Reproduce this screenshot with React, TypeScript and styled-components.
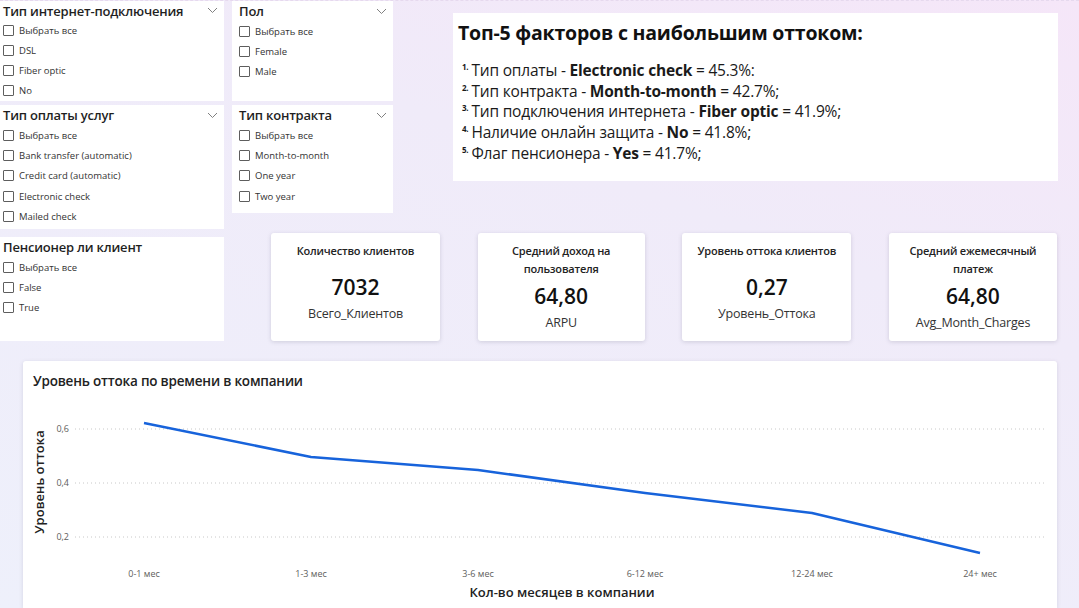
import React from "react";
import styled, { createGlobalStyle } from "styled-components";

const Global = createGlobalStyle`
  html, body { margin: 0; padding: 0; }
  body {
    width: 1079px;
    height: 608px;
    overflow: hidden;
    font-family: "Open Sans", "Noto Sans", sans-serif;
    color: #252423;
    background: linear-gradient(200deg, #f5e6f8 0%, #f0ebf9 35%, #eef0fb 100%);
  }
`;

const Page = styled.div`
  width: 1079px;
  height: 608px;
  display: flex;
  flex-direction: column;
  border-top: 1px dashed #e6d9ee;
  box-sizing: border-box;
`;

const Top = styled.div`
  display: flex;
  gap: 8px;
  height: 360px;
`;

const LeftCol = styled.div`
  width: 224px;
  display: flex;
  flex-direction: column;
`;

const RightArea = styled.div`
  flex: 1;
  display: flex;
  flex-direction: column;
`;

const TopRow = styled.div`
  display: flex;
  align-items: flex-start;
`;

const MidCol = styled.div`
  width: 161px;
  display: flex;
  flex-direction: column;
  gap: 4px;
`;

const Slicer = styled.div<{ $h: number; $mt?: number; $pl?: number }>`
  background: #fff;
  height: ${(p) => p.$h}px;
  margin-top: ${(p) => p.$mt ?? 0}px;
  box-sizing: border-box;
  padding: 0 6px 0 ${(p) => p.$pl ?? 3}px;
  display: flex;
  flex-direction: column;
`;

const SlicerHead = styled.div`
  display: flex;
  justify-content: space-between;
  align-items: center;
  height: 20px;
`;

const SlicerTitle = styled.div`
  font-size: 13px;
  font-weight: 600;
  color: #1f1f1f;
  letter-spacing: -0.2px;
`;

const Item = styled.div`
  display: flex;
  align-items: center;
  height: 20.3px;
  font-size: 9.5px;
  color: #333;
  gap: 5px;
`;

const Box = styled.span`
  width: 9px;
  height: 9px;
  border: 1px solid #5e5e5e;
  border-radius: 1px;
  flex: none;
`;

const Chevron = () => (
  <svg width="11" height="7" viewBox="0 0 11 7">
    <path d="M1 1 L5.5 5.5 L10 1" fill="none" stroke="#808080" strokeWidth="1" />
  </svg>
);

const TextBox = styled.div`
  margin-left: 60px;
  margin-top: 12px;
  width: 605px;
  height: 168px;
  background: #fff;
  box-sizing: border-box;
  padding: 6px 5px;
`;

const TextTitle = styled.div`
  font-size: 19.5px;
  line-height: 27px;
  font-weight: 700;
  color: #111;
  letter-spacing: -0.2px;
  margin-bottom: 14px;
`;

const Line = styled.div`
  font-size: 15.5px;
  line-height: 20.7px;
  color: #1a1a1a;
  letter-spacing: -0.2px;
  padding-left: 4px;
  b { font-weight: 700; }
`;

const Num = styled.sup`
  font-size: 8px;
  font-weight: 700;
  margin-right: 3px;
  line-height: 0;
  vertical-align: 6px;
`;

const KpiRow = styled.div`
  display: flex;
  justify-content: space-between;
  width: 786px;
  margin-top: 20px;
  margin-left: 39px;
`;

const Card = styled.div<{ $w: number }>`
  width: ${(p) => p.$w}px;
  height: 108px;
  background: #fff;
  border-radius: 3px;
  box-shadow: 0 1px 4px rgba(60, 60, 90, 0.18);
  display: flex;
  flex-direction: column;
  align-items: center;
  text-align: center;
  box-sizing: border-box;
  padding: 9px 10px 4px;
`;

const CardTitle = styled.div`
  font-size: 11px;
  font-weight: 600;
  color: #222;
  line-height: 17.5px;
  letter-spacing: -0.2px;
`;

const CardBody = styled.div`
  flex: 1;
  display: flex;
  flex-direction: column;
  align-items: center;
  justify-content: center;
`;

const CardValue = styled.div`
  font-size: 21px;
  font-weight: 600;
  color: #111;
  line-height: 26px;
`;

const CardSub = styled.div`
  font-size: 12.5px;
  line-height: 17px;
  color: #333;
  margin-top: 5px;
  letter-spacing: -0.2px;
`;

const ChartCard = styled.div`
  margin-left: 23px;
  width: 1034px;
  flex: 1;
  background: #fff;
  border-radius: 3px 3px 0 0;
  box-shadow: 0 1px 4px rgba(60, 60, 90, 0.15);
  display: flex;
  flex-direction: column;
`;

const ChartTitle = styled.div`
  font-size: 13.5px;
  font-weight: 600;
  color: #222;
  padding: 11px 0 0 10px;
  height: 23px;
  letter-spacing: -0.2px;
`;

const Plot = styled.svg`
  display: block;
  font-family: "Open Sans", "Noto Sans", sans-serif;
`;

type S = { title: string; items: string[]; h: number; chev: boolean; mt?: number };

const slicers1: S[] = [
  { title: "Тип интернет-подключения", items: ["Выбрать все", "DSL", "Fiber optic", "No"], h: 100, mt: 0, chev: true },
  { title: "Тип оплаты услуг", items: ["Выбрать все", "Bank transfer (automatic)", "Credit card (automatic)", "Electronic check", "Mailed check"], h: 124, mt: 4, chev: true },
  { title: "Пенсионер ли клиент", items: ["Выбрать все", "False", "True"], h: 104, mt: 8, chev: false },
];
const slicers2: S[] = [
  { title: "Пол", items: ["Выбрать все", "Female", "Male"], h: 100, chev: true },
  { title: "Тип контракта", items: ["Выбрать все", "Month-to-month", "One year", "Two year"], h: 108, chev: true },
];

const SlicerView = ({ s, pl }: { s: S; pl?: number }) => (
  <Slicer $h={s.h} $mt={s.mt} $pl={pl}>
    <SlicerHead>
      <SlicerTitle>{s.title}</SlicerTitle>
      {s.chev && <Chevron />}
    </SlicerHead>
    {s.items.map((it) => (
      <Item key={it}>
        <Box />
        {it}
      </Item>
    ))}
  </Slicer>
);

const kpis = [
  { w: 169, title: ["Количество клиентов"], value: "7032", sub: "Всего_Клиентов" },
  { w: 167, title: ["Средний доход на", "пользователя"], value: "64,80", sub: "ARPU" },
  { w: 169, title: ["Уровень оттока клиентов"], value: "0,27", sub: "Уровень_Оттока" },
  { w: 168, title: ["Средний ежемесячный", "платеж"], value: "64,80", sub: "Avg_Month_Charges" },
];

const pts = [
  { x: 121, y: 28, l: "0-1 мес" },
  { x: 288, y: 62, l: "1-3 мес" },
  { x: 455, y: 75, l: "3-6 мес" },
  { x: 622, y: 98, l: "6-12 мес" },
  { x: 789, y: 118, l: "12-24 мес" },
  { x: 957, y: 158, l: "24+ мес" },
];

const grid = [
  { y: 34, l: "0,6" },
  { y: 88, l: "0,4" },
  { y: 142, l: "0,2" },
];

export default function App() {
  return (
    <>
      <Global />
      <Page>
        <Top>
          <LeftCol>
            {slicers1.map((s) => (
              <SlicerView key={s.title} s={s} />
            ))}
          </LeftCol>
          <RightArea>
            <TopRow>
              <MidCol>
                {slicers2.map((s) => (
                  <SlicerView key={s.title} s={s} pl={7} />
                ))}
              </MidCol>
              <TextBox>
                <TextTitle>Топ-5 факторов с наибольшим оттоком:</TextTitle>
                <Line><Num>1.</Num>Тип оплаты - <b>Electronic check</b> = 45.3%:</Line>
                <Line><Num>2.</Num>Тип контракта - <b>Month-to-month</b> = 42.7%;</Line>
                <Line><Num>3.</Num>Тип подключения интернета - <b>Fiber optic</b> = 41.9%;</Line>
                <Line><Num>4.</Num>Наличие онлайн защита - <b>No</b> = 41.8%;</Line>
                <Line><Num>5.</Num>Флаг пенсионера - <b>Yes</b> = 41.7%;</Line>
              </TextBox>
            </TopRow>
            <KpiRow>
              {kpis.map((k) => (
                <Card key={k.sub} $w={k.w}>
                  <CardTitle>
                    {k.title.map((t, i) => (
                      <div key={i}>{t}</div>
                    ))}
                  </CardTitle>
                  <CardBody>
                    <CardValue>{k.value}</CardValue>
                    <CardSub>{k.sub}</CardSub>
                  </CardBody>
                </Card>
              ))}
            </KpiRow>
          </RightArea>
        </Top>
        <ChartCard>
          <ChartTitle>Уровень оттока по времени в компании</ChartTitle>
          <Plot width="1034" height="213" viewBox="0 0 1034 213">
            {grid.map((g) => (
              <g key={g.l}>
                <line x1="52" x2="1024" y1={g.y} y2={g.y} stroke="#c8c8c8" strokeWidth="1" strokeDasharray="1 3" />
                <text x="46" y={g.y + 3} fontSize="9" fill="#605e5c" textAnchor="end">{g.l}</text>
              </g>
            ))}
            <polyline
              points={pts.map((p) => `${p.x},${p.y}`).join(" ")}
              fill="none"
              stroke="#1763db"
              strokeWidth="2.5"
              strokeLinejoin="round"
            />
            {pts.map((p) => (
              <text key={p.l} x={p.x} y="182" fontSize="9" fill="#605e5c" textAnchor="middle">{p.l}</text>
            ))}
            <text x="539" y="202" fontSize="13" fontWeight="600" fill="#222" textAnchor="middle">Кол-во месяцев в компании</text>
            <text x="0" y="0" fontSize="13" fontWeight="600" fill="#222" textAnchor="middle" transform="translate(21 87) rotate(-90)">Уровень оттока</text>
          </Plot>
        </ChartCard>
      </Page>
    </>
  );
}
